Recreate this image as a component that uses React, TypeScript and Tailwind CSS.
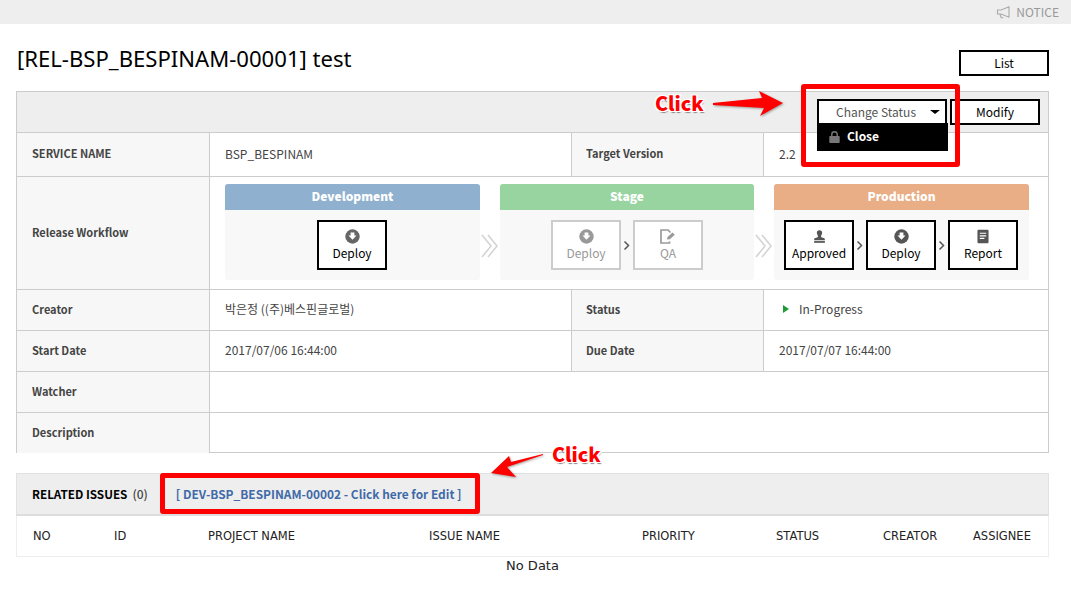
import React from "react";

const font = "font-['Noto_Sans_CJK_KR','Noto_Sans',sans-serif]";

function DownIcon({ color }: { color: string }) {
  return (
    <svg width="15" height="15" viewBox="0 0 15 15">
      <circle cx="7.5" cy="7.5" r="7.2" fill={color} />
      <path d="M5.6 3.4h3.8v3.2h2.1L7.5 10.8 3.5 6.6h2.1z" fill="#fff" />
    </svg>
  );
}
function StampIcon() {
  return (
    <svg width="13" height="15" viewBox="0 0 15 15">
      <path d="M7.5 0.3c2.100 0 3.100 1.400 3.100 3 0 1.700-1.300 2.800-1.300 4.200 0 .8.700 1.200 2 1.400 1.500.3 2.400.8 2.400 2v1H1.300v-1c0-1.200.9-1.700 2.400-2 1.300-.2 2-.6 2-1.400C5.700 6.100 4.400 5 4.400 3.300c0-1.600 1-3 3.100-3z" fill="#555" />
      <rect x="1.300" y="12.800" width="12.400" height="2" fill="#555" />
    </svg>
  );
}
function ReportIcon() {
  return (
    <svg width="12" height="15" viewBox="0 0 13 15">
      <path d="M1.500 0.300h10a1 1 0 0 1 1 1v12.400a1 1 0 0 1-1 1h-10a1 1 0 0 1-1-1V1.300a1 1 0 0 1 1-1z" fill="#555" />
      <path d="M3 4h7M3 6.800h7M3 9.600h5" stroke="#fff" strokeWidth="1.300" />
    </svg>
  );
}
function QaIcon() {
  return (
    <svg width="16" height="15" viewBox="0 0 16 15">
      <path d="M9.500 12.500v1.500H1V1h7l2.500 2.500" fill="none" stroke="#9a9a9a" strokeWidth="1.700" />
      <path d="M7 10.500l.5-2.500 5-4.500 2.300 2.200-5 4.500z" fill="#9a9a9a" />
    </svg>
  );
}
function Chev() {
  return (
    <svg width="8" height="11" viewBox="0 0 8 11" className="shrink-0">
      <path d="M1.500 1.500l4 4-4 4" fill="none" stroke="#555" strokeWidth="1.500" />
    </svg>
  );
}
function Dbl() {
  return (
    <svg width="20" height="26" viewBox="0 0 20 26" className="shrink-0">
      <path d="M2 2l9 11-9 11M8 2l9 11-9 11" fill="none" stroke="#d4d4d4" strokeWidth="1.600" />
    </svg>
  );
}
function Step({ icon, label, off }: { icon: React.ReactNode; label: string; off?: boolean }) {
  return (
    <div className={`w-[70px] h-[50px] border-2 bg-white flex flex-col items-center pt-[7px] ${off ? "border-[#ccc] text-[#999]" : "border-black text-black"}`}>
      <div className="h-[15px] flex items-center">{icon}</div>
      <span className="text-[12px] leading-[17px]">{label}</span>
    </div>
  );
}
function Stage({ title, color, width, inner = "", children }: { title: string; color: string; width: string; inner?: string; children: React.ReactNode }) {
  return (
    <div className={`${width} h-[96px] rounded-[3px] bg-[#f8f8f8] overflow-hidden`}>
      <div className={`${color} h-[26px] text-white font-black text-[12px] leading-[24px] text-center`}>{title}</div>
      <div className={`flex justify-center items-center gap-[2px] pt-[10px] ${inner}`}>{children}</div>
    </div>
  );
}
function Th({ children, className = "" }: { children?: React.ReactNode; className?: string }) {
  return <div className={`bg-[#f7f7f7] flex items-center pb-[2px] text-[11px] font-bold text-[#444] ${className}`}>{children}</div>;
}
function Td({ children, className = "" }: { children?: React.ReactNode; className?: string }) {
  return <div className={`pl-[15px] pb-[2px] flex items-center text-[12px] text-[#444] border-l border-[#ccc] ${className}`}>{children}</div>;
}
function Row({ children, h }: { children: React.ReactNode; h: string }) {
  return <div className={`flex ${h} border-t border-[#ccc]`}>{children}</div>;
}
function Click({ className }: { className: string }) {
  return (
    <span className={`absolute text-[19.500px] leading-[22px] font-black text-[#f00] [text-shadow:-1.5px_-1px_0_#fff,1.5px_-1px_0_#fff,-1.5px_1px_0_#fff,1.5px_1px_0_#fff,1px_2px_1px_#888] ${className}`}>
      Click
    </span>
  );
}

export default function App() {
  const c0 = "w-[192px] pl-[15px]";
  const c1 = "w-[362px]";
  const c2 = "w-[192px] pl-[14px] border-l border-[#ccc]";
  const c3 = "flex-1";
  return (
    <div className={`relative w-[1071px] h-[590px] overflow-hidden bg-white ${font}`}>
      <div className="h-6 bg-[#eee] flex items-center justify-end pr-[12px] text-[12px] text-[#999] gap-[6px]">
        <svg width="14" height="13" viewBox="0 0 14 13" fill="none" stroke="#aaa" strokeWidth="1.100">
          <path d="M13 .8v10.400L5 8H1.500V4H5zM4 8.200l1.200 3.500h2.200" />
        </svg>
        NOTICE
      </div>
      <div className="px-4">
        <div className="flex justify-between h-[67px] w-[1033px]">
          <h1 className="font-['Noto_Sans',sans-serif] text-[22.100px] leading-[34px] text-black pt-[17px] pl-[1px]">[REL-BSP_BESPINAM-00001] test</h1>
          <button className="mt-[26px] w-[90px] h-[26px] border-2 border-black text-[12px] text-black bg-white">List</button>
        </div>
        <div className="border border-[#ccc] h-[362px] w-[1033px]">
          <div className="h-[40px] bg-[#eee] flex justify-end pt-[7px] pr-[8px] gap-[3px]">
            <div className="relative">
              <button className="w-[130px] h-[26px] border-2 border-black bg-white text-[12px] text-[#555] flex items-center pl-[17px]">
                Change Status
                <span className="ml-[14px] border-x-[5px] border-x-transparent border-t-[4.500px] border-t-black" />
              </button>
              <div className="absolute left-0 top-[24px] w-[131px] h-[28px] bg-black text-white text-[12px] font-bold flex items-center pl-[12px] pb-[2px] gap-[7px] z-10">
                <svg width="11" height="12" viewBox="0 0 11 12" className="mt-[2px]">
                  <path d="M1 5h9a.7.700 0 0 1 .7.700v5.600a.7.700 0 0 1-.7.700H1a.7.700 0 0 1-.7-.7V5.700A.7.700 0 0 1 1 5z" fill="#777" />
                  <path d="M2.800 5.500V3.400a2.700 2.700 0 0 1 5.400 0v2.100" fill="none" stroke="#777" strokeWidth="1.400" />
                </svg>
                Close
              </div>
            </div>
            <button className="w-[90px] h-[26px] border-2 border-black bg-white text-[12px] text-black">Modify</button>
          </div>
          <Row h="h-[44px]">
            <Th className={c0}>SERVICE NAME</Th>
            <Td className={c1}>BSP_BESPINAM</Td>
            <Th className={c2}>Target Version</Th>
            <Td className={`${c3} text-[#3f6aa8]`}>2.2</Td>
          </Row>
          <Row h="h-[113px]">
            <Th className={c0}>Release Workflow</Th>
            <div className="flex-1 border-l border-[#ccc] pl-[15px] pt-[7px] flex items-start">
              <Stage title="Development" color="bg-[#8fb0cf]" width="w-[255px]" inner="pr-[1px]">
                <Step icon={<DownIcon color="#666" />} label="Deploy" />
              </Stage>
              <div className="w-[20px] h-[96px] flex items-center pt-[27px]"><Dbl /></div>
              <Stage title="Stage" color="bg-[#98d49f]" width="w-[254px]">
                <Step off icon={<DownIcon color="#999" />} label="Deploy" />
                <Chev />
                <Step off icon={<QaIcon />} label="QA" />
              </Stage>
              <div className="w-[20px] h-[96px] flex items-center pt-[27px]"><Dbl /></div>
              <Stage title="Production" color="bg-[#e9ae85]" width="w-[255px]" inner="pr-[1px]">
                <Step icon={<StampIcon />} label="Approved" />
                <Chev />
                <Step icon={<DownIcon color="#555" />} label="Deploy" />
                <Chev />
                <Step icon={<ReportIcon />} label="Report" />
              </Stage>
            </div>
          </Row>
          <Row h="h-[41px]">
            <Th className={c0}>Creator</Th>
            <Td className={c1}>박은정 ((주)베스핀글로벌)</Td>
            <Th className={c2}>Status</Th>
            <Td className={`${c3} gap-[10px]`}>
              <span className="ml-[4px] border-y-[4px] border-y-transparent border-l-[6px] border-l-[#1f9a36]" />
              In-Progress
            </Td>
          </Row>
          <Row h="h-[41px]">
            <Th className={c0}>Start Date</Th>
            <Td className={c1}>2017/07/06 16:44:00</Td>
            <Th className={c2}>Due Date</Th>
            <Td className={c3}>2017/07/07 16:44:00</Td>
          </Row>
          <Row h="h-[41px]">
            <Th className={c0}>Watcher</Th>
            <Td className="flex-1" />
          </Row>
          <Row h="h-[41px]">
            <Th className={c0}>Description</Th>
            <Td className="flex-1" />
          </Row>
        </div>
        <div className="mt-[20px] w-[1033px] h-[43px] bg-[#eee] border border-[#e2e2e2] border-b-2 border-b-[#ddd] flex items-center pl-[15px]">
          <span className="text-[11.700px] font-bold text-black">RELATED ISSUES</span>
          <span className="text-[12px] font-medium text-[#444] ml-[5px]">(0)</span>
          <span className="text-[11.900px] font-bold text-[#3f6aa8] ml-[28px]">[ DEV-BSP_BESPINAM-00002 - Click here for Edit ]</span>
        </div>
        <div className="w-[1033px] h-[41px] pt-[1px] border-x border-b border-[#eee] font-['DejaVu_Sans',sans-serif] text-[11.500px] text-[#222] flex items-center">
          <div className="w-[97px] pl-[16px]">NO</div>
          <div className="w-[94px]">ID</div>
          <div className="w-[221px]">PROJECT NAME</div>
          <div className="w-[213px]">ISSUE NAME</div>
          <div className="w-[134px]">PRIORITY</div>
          <div className="w-[107px]">STATUS</div>
          <div className="w-[90px]">CREATOR</div>
          <div>ASSIGNEE</div>
        </div>
        <div className="font-['DejaVu_Sans',sans-serif] w-[1033px] text-center text-[13px] text-[#222] leading-[16px] mt-[1px]">No Data</div>
      </div>

      <div className="absolute left-[801px] top-[84px] w-[159px] h-[83px] border-[5px] border-[#f00] rounded-[3px]" />
      <div className="absolute left-[160px] top-[473px] w-[320px] h-[41px] border-[5px] border-[#f00] rounded-[3px]" />
      <Click className="left-[655px] top-[92px]" />
      <Click className="left-[552px] top-[443px]" />
      <svg className="absolute left-[712px] top-[90px] drop-shadow-[1px_1px_1px_rgba(0,0,0,0.35)]" width="72" height="28" viewBox="0 0 72 28">
        <path d="M1 13L50 8 47 1 71 13 48 26 52 18 1 15z" fill="#f00" />
      </svg>
      <svg className="absolute left-[490px] top-[452px] drop-shadow-[1px_1px_1px_rgba(0,0,0,0.35)]" width="56" height="28" viewBox="0 0 56 28">
        <path d="M53 2L21 10 19 4 1 21 26 25 17 15 53 3z" fill="#f00" />
      </svg>
    </div>
  );
}
